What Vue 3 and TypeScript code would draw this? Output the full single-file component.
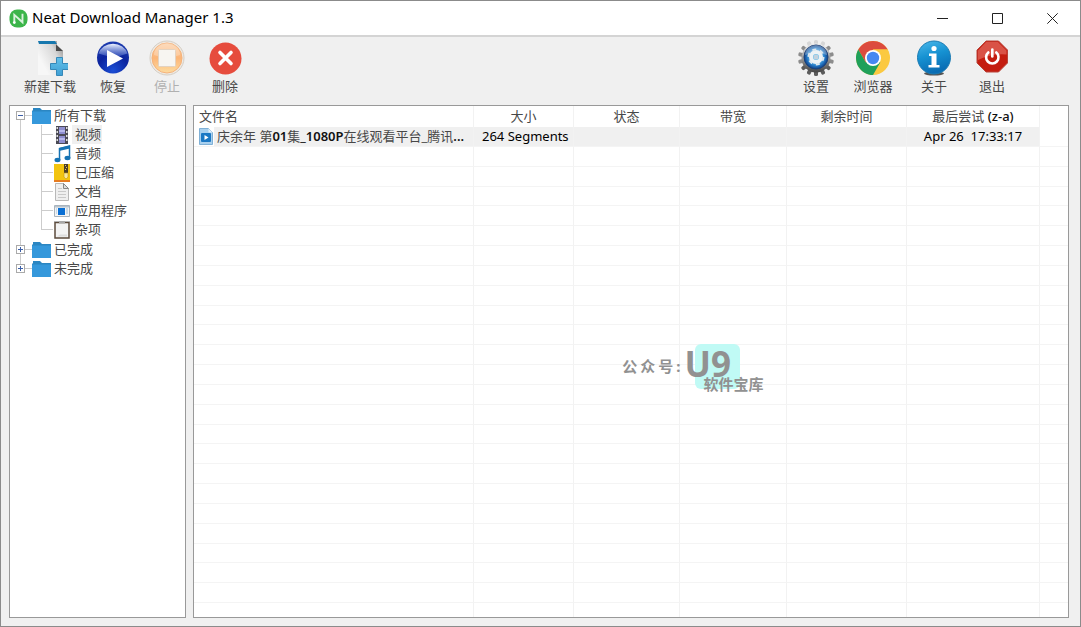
<script setup lang="ts">
import { ref } from 'vue'

interface Column {
  id: string
  label: string
}
interface Category {
  id: string
  label: string
}

const columns: Column[] = [
  { id: 'name', label: '文件名' },
  { id: 'size', label: '大小' },
  { id: 'status', label: '状态' },
  { id: 'bandwidth', label: '带宽' },
  { id: 'left', label: '剩余时间' },
  { id: 'last', label: '最后尝试' },
]

const categories: Category[] = [
  { id: 'video', label: '视频' },
  { id: 'audio', label: '音频' },
  { id: 'zip', label: '已压缩' },
  { id: 'doc', label: '文档' },
  { id: 'app', label: '应用程序' },
  { id: 'misc', label: '杂项' },
]

const groups: Category[] = [
  { id: 'done', label: '已完成' },
  { id: 'undone', label: '未完成' },
]

const emptyRows = 24
const selected = ref('video')
const teeth = Array.from({ length: 14 }, (_, i) => (i * 360) / 14)
const filmHoles = [1, 5, 9, 13]

function toothColor(angle: number): string {
  if (angle < 40 || angle > 320) return '#d6d6d6'
  if (angle > 110 && angle < 250) return '#5c5c5c'
  return '#8c8c8c'
}
</script>

<template>
  <div class="window">
    <header class="titlebar">
      <svg class="logo" viewBox="0 0 20 20" aria-hidden="true">
        <rect x="0.5" y="0.5" width="19" height="19" rx="8" fill="#3cb54a" />
        <path d="M5.600 13V6.200L14.200 14V5" fill="none" stroke="#d9f2dc" stroke-width="2" />
        <circle cx="5.600" cy="14.200" r="1.500" fill="#fff" />
      </svg>
      <h1>Neat Download Manager 1.3</h1>
      <button class="wbtn" aria-label="Minimize">
        <svg viewBox="0 0 11 11"><path d="M0 5.5h11" /></svg>
      </button>
      <button class="wbtn" aria-label="Maximize">
        <svg viewBox="0 0 11 11"><path d="M.5 .5h10v10H.5z" /></svg>
      </button>
      <button class="wbtn" aria-label="Close">
        <svg viewBox="0 0 11 11"><path d="M.3 .3l10.4 10.4M10.7 .3L.3 10.7" /></svg>
      </button>
    </header>

    <nav class="toolbar">
      <button class="tool t-new">
        <svg viewBox="0 0 36 36">
          <defs>
            <linearGradient id="paper" x1="1" y1="0.1" x2="0.2" y2="0.7">
              <stop offset="0" stop-color="#8f8f8f" /><stop offset="0.4" stop-color="#d8d8d8" /><stop offset="1" stop-color="#f7f7f7" />
            </linearGradient>
            <linearGradient id="plus" x1="0" y1="0" x2="0" y2="1">
              <stop offset="0" stop-color="#62c0ea" /><stop offset="1" stop-color="#3f9fd4" />
            </linearGradient>
          </defs>
          <path d="M6 1h19v4l6 6v24H6z" fill="url(#paper)" />
          <path d="M6 1h17l2 3H7z" fill="#1778ae" />
          <path d="M24 4.500l7 6.500h-7z" fill="#4a4a4a" />
          <path d="M24.500 17.500h6v6h6v6h-6v6h-6v-6h-6v-6h6z" fill="url(#plus)" stroke="#3688b8" />
        </svg>
        <span>新建下载</span>
      </button>
      <button class="tool t-resume">
        <svg viewBox="0 0 36 36">
          <defs>
            <radialGradient id="blue" cx="0.5" cy="0.9" r="0.9">
              <stop offset="0" stop-color="#1c4fd6" /><stop offset="0.55" stop-color="#0c249e" /><stop offset="1" stop-color="#1d3cae" />
            </radialGradient>
            <linearGradient id="shine" x1="0" y1="0" x2="0" y2="1">
              <stop offset="0" stop-color="#eef3ff" /><stop offset="1" stop-color="#5876cf" stop-opacity="0.5" />
            </linearGradient>
          </defs>
          <circle cx="18" cy="17.500" r="16" fill="url(#blue)" />
          <path d="M3.500 13.500a15 13 0 0 1 29 0q-14 6-29 0z" fill="url(#shine)" />
          <path d="M12 10v17L28 18.500z" fill="#fff" />
        </svg>
        <span>恢复</span>
      </button>
      <button class="tool t-stop" disabled>
        <svg viewBox="0 0 36 36">
          <defs>
            <linearGradient id="peach" x1="0" y1="0" x2="0" y2="1">
              <stop offset="0" stop-color="#fbcfa6" /><stop offset="0.5" stop-color="#fcb577" /><stop offset="1" stop-color="#fddca0" />
            </linearGradient>
          </defs>
          <circle cx="18" cy="18" r="17" fill="#eee9e2" stroke="#d5cec5" />
          <circle cx="18" cy="18" r="15" fill="url(#peach)" stroke="#f5b27a" />
          <path d="M5 15a13 12 0 0 1 26 0q-13 5-26 0z" fill="#fff" opacity="0.25" />
          <rect x="9.500" y="9.500" width="17" height="17" rx="1" fill="#f7f5f1" stroke="#e3d2c0" />
        </svg>
        <span>停止</span>
      </button>
      <button class="tool t-delete">
        <svg viewBox="0 0 36 36">
          <circle cx="18.500" cy="18.500" r="16" fill="#e64c3d" />
          <path d="M13 12.500l11 11M24 12.500l-11 11" stroke="#fff" stroke-width="3.600" stroke-linecap="round" />
        </svg>
        <span>删除</span>
      </button>
      <span class="spacer"></span>
      <button class="tool t-settings">
        <svg viewBox="0 0 36 36">
          <defs>
            <linearGradient id="steel" x1="0" y1="0" x2="0" y2="1">
              <stop offset="0" stop-color="#eee" /><stop offset="0.4" stop-color="#aaa" /><stop offset="1" stop-color="#444" />
            </linearGradient>
            <radialGradient id="ring">
              <stop offset="0.4" stop-color="#6bc0ec" /><stop offset="0.75" stop-color="#2377c4" /><stop offset="1" stop-color="#123f83" />
            </radialGradient>
          </defs>
          <rect
            v-for="a in teeth"
            :key="a"
            x="16"
            y="0"
            width="4"
            height="8"
            rx="1.500"
            :transform="`rotate(${a} 18 18)`"
            :fill="toothColor(a)"
          />
          <circle cx="18" cy="18" r="14.500" fill="url(#steel)" />
          <circle cx="18" cy="17" r="12" fill="url(#ring)" stroke="#1b427b" />
          <path d="M7 15a11 10 0 0 1 22 0q-11-4-22 0z" fill="#fff" opacity="0.3" />
          <circle cx="18" cy="17" r="5" fill="none" stroke="#eef2f5" stroke-width="4" />
          <circle cx="18" cy="17" r="7.500" fill="none" stroke="#dfe8ee" stroke-dasharray="4 3.850" stroke-width="2" />
          <circle cx="18" cy="17" r="2.500" fill="#c3d2de" />
        </svg>
        <span>设置</span>
      </button>
      <button class="tool t-browser">
        <svg viewBox="0 0 36 36">
          <circle cx="18" cy="18" r="17" fill="#fbc941" />
          <path d="M3.280 9.500A17 17 0 0 1 32.720 9.500H18L10.640 22.250z" fill="#dc4b3e" />
          <path d="M3.280 9.500A17 17 0 0 0 18 35L25.360 22.250H10.640z" fill="#1fa05a" />
          <path d="M18 9.500H32.720L35 18l-9.600 4.250z" fill="#fbc941" />
          <circle cx="18" cy="18" r="8" fill="#fff" />
          <circle cx="18" cy="18" r="6.200" fill="#4688f1" />
        </svg>
        <span>浏览器</span>
      </button>
      <button class="tool t-about">
        <svg viewBox="0 0 36 36">
          <defs>
            <linearGradient id="cyan" x1="0" y1="0" x2="0.3" y2="1">
              <stop offset="0" stop-color="#4db9ea" /><stop offset="0.5" stop-color="#1692d2" /><stop offset="1" stop-color="#0a6db4" />
            </linearGradient>
          </defs>
          <ellipse cx="18" cy="33.500" rx="10" ry="2" fill="#555" />
          <circle cx="18" cy="17.500" r="16.500" fill="url(#cyan)" stroke="#1c7cb4" />
          <circle cx="18" cy="8.500" r="2.600" fill="#fff" />
          <path d="M13 13.500h7.500v11.500h3v2.500h-11v-2.500h3v-9H13z" fill="#fff" />
        </svg>
        <span>关于</span>
      </button>
      <button class="tool t-exit">
        <svg viewBox="0 0 36 36">
          <path d="M12 1h12.500l9 9v13l-9 9H12l-9-9v-13z" fill="#c41d10" stroke="#b9453a" />
          <path d="M12 2h12l8.500 8.500v4Q18 13 4 20v-9.500z" fill="#e36a5e" opacity="0.7" />
          <path d="M14.300 12.500a6.200 6.200 0 1 0 8 0" fill="none" stroke="#fff" stroke-width="2.600" stroke-linecap="round" />
          <path d="M18.300 9.500v7" stroke="#fff" stroke-width="2.600" stroke-linecap="round" />
        </svg>
        <span>退出</span>
      </button>
    </nav>

    <main class="body">
      <aside class="panel tree">
        <ul class="roots">
          <li>
            <div class="node">
              <button class="toggle" aria-label="Collapse"><svg viewBox="0 0 9 9"><path d="M2 4.500h5" /></svg></button>
              <i class="dash"></i>
              <button class="entry root">
                <svg class="folder" viewBox="0 0 19 16"><path d="M0 2.500h1V0h7l2 2h9v14H0z" fill="#2b86c2" /><path d="M0 3.500h19V16H0z" fill="#3598db" /></svg>
                <span>所有下载</span>
              </button>
            </div>
            <ul class="children">
              <li v-for="c in categories" :key="c.id">
                <button class="entry" :class="{ on: selected === c.id }" @click="selected = c.id">
                  <svg v-if="c.id === 'video'" class="leaf" viewBox="0 0 17 18">
                    <path d="M2 0h12v18H2z" fill="#4b4a55" />
                    <path d="M5 1h6v7H5zM5 10h6v7H5z" fill="#8e8ed0" />
                    <path d="M5 4h6v2H5zM5 12h6v2H5z" fill="#b7b8ec" />
                    <rect v-for="y in filmHoles" :key="y" x="2.500" :y="y" width="1.500" height="2" fill="#ddd" />
                    <rect v-for="y in filmHoles" :key="'r' + y" x="12" :y="y" width="1.500" height="2" fill="#ddd" />
                  </svg>
                  <svg v-else-if="c.id === 'audio'" class="leaf" viewBox="0 0 17 18">
                    <path d="M5.500 15V3.500L15.500 1v12" fill="none" stroke="#1673b4" stroke-width="1.500" />
                    <path d="M5 3l11-2.500v3L5 6z" fill="#1673b4" />
                    <ellipse cx="3.500" cy="15" rx="3" ry="2.200" fill="#1673b4" />
                    <ellipse cx="13.500" cy="13" rx="3" ry="2.200" fill="#1673b4" />
                  </svg>
                  <svg v-else-if="c.id === 'zip'" class="leaf" viewBox="0 0 17 18">
                    <path d="M0 0h16v17H0z" fill="#f2c40f" /><path d="M0 16h16v2H0z" fill="#e67c22" />
                    <path d="M10 0h4v9h-4z" fill="#4b3e28" /><path d="M11 1h1v1h-1zM12 3h1v1h-1zM11 5h1v1h-1z" fill="#e3c661" />
                    <path d="M10 9h4v4l-2 2-2-2z" fill="#f7e7a0" stroke="#c49c12" stroke-width=".6" />
                  </svg>
                  <svg v-else-if="c.id === 'doc'" class="leaf" viewBox="0 0 17 18">
                    <path d="M1.500 .5h8l5 5v12h-13z" fill="#efefef" stroke="#b8b8b8" /><path d="M9.500 .5v5h5z" fill="#ddd" stroke="#888" />
                    <path d="M4 5.500h4M4 8.500h8M4 11.500h8M4 14.500h8" stroke="#c9c9c9" />
                  </svg>
                  <svg v-else-if="c.id === 'app'" class="leaf" viewBox="0 0 17 18">
                    <path d="M.5 3.500h15v11H.5z" fill="#f4f4f4" stroke="#aab4bd" /><path d="M1 4h14v1.500H1z" fill="#b7c3cd" />
                    <path d="M4 6h7v7H4z" fill="#0a6fd4" /><path d="M2 7h1M2 9h1M2 11h1M12 7h2M12 9h2M12 11h2" stroke="#9fc0da" />
                  </svg>
                  <svg v-else class="leaf" viewBox="0 0 17 18">
                    <path d="M1 1.500h14v15.500H1z" fill="#f3f3f3" stroke="#5c4b3d" stroke-width="1.500" />
                    <path d="M0 .5h16" stroke="#b4b4b4" /><path d="M5 0h6v2.500H5z" fill="#a9a9a9" /><path d="M3 15.500l3-2h7v2z" fill="#ddd" />
                  </svg>
                  <span>{{ c.label }}</span>
                </button>
              </li>
            </ul>
          </li>
          <li v-for="g in groups" :key="g.id">
            <div class="node">
              <button class="toggle" aria-label="Expand"><svg viewBox="0 0 9 9"><path d="M2 4.500h5M4.500 2v5" /></svg></button>
              <i class="dash"></i>
              <button class="entry root">
                <svg class="folder" viewBox="0 0 19 16"><path d="M0 2.500h1V0h7l2 2h9v14H0z" fill="#2b86c2" /><path d="M0 3.500h19V16H0z" fill="#3598db" /></svg>
                <span>{{ g.label }}</span>
              </button>
            </div>
          </li>
        </ul>
      </aside>

      <section class="panel list">
        <table>
          <thead>
            <tr>
              <th v-for="c in columns" :key="c.id" scope="col">{{ c.label }}<b v-if="c.id === 'last'"> (z-a)</b></th>
              <td></td>
            </tr>
          </thead>
          <tbody>
            <tr class="file">
              <td class="name">
                <svg viewBox="0 0 14 17">
                  <path d="M.5 .5h9l4 4v12H.5z" fill="#a9d0ee" stroke="#7fb0d6" /><path d="M9.500 .5v4h4z" fill="#e4f1fb" />
                  <rect x="2" y="5" width="10" height="9" rx="1" fill="#1b78c4" /><path d="M5.500 7v5l4-2.500z" fill="#fff" />
                </svg>
                <span>庆余年 第<b>01</b>集<b>_1080P</b>在线观看平台_腾讯<b>...</b></span>
              </td>
              <td class="size">264 Segments</td>
              <td></td>
              <td></td>
              <td></td>
              <td class="last">Apr 26&nbsp; 17:33:17</td>
              <td class="rest"></td>
            </tr>
            <tr v-for="n in emptyRows" :key="n">
              <td v-for="k in 7" :key="k"></td>
            </tr>
          </tbody>
        </table>
        <div class="mark">
          <div class="account"><span>公</span><span>众</span><span>号</span><span>:</span></div>
          <div class="badge">
            <strong>U9</strong>
            <em>软件宝库</em>
          </div>
        </div>
      </section>
    </main>
  </div>
</template>

<style>
html,
body,
#app {
  height: 100%;
}
</style>

<style scoped>
.window {
  box-sizing: border-box;
  height: 100%;
  display: flex;
  flex-direction: column;
  border: 1px solid #8b8b8b;
  background: #f0f0f0;
  color: #484848;
  font: 13px/19px "Noto Sans", "Noto Sans CJK SC", sans-serif;
}
button {
  margin: 0;
  padding: 0;
  border: 0;
  background: none;
  font: inherit;
  color: inherit;
}
ul {
  margin: 0;
  padding: 0;
  list-style: none;
}
svg {
  display: block;
  flex: none;
}
.titlebar {
  display: flex;
  align-items: center;
  height: 34px;
  padding-left: 8px;
  background: #fff;
  border-bottom: 2px solid #d4d4d4;
}
.logo {
  width: 19px;
  height: 19px;
}
h1 {
  flex: 1;
  margin: 0 0 0 4px;
  padding-bottom: 2px;
  font: 15px/20px "Noto Sans", sans-serif;
  color: #000;
}
.wbtn {
  display: flex;
  align-items: center;
  justify-content: center;
  width: 55px;
  height: 34px;
}
.wbtn svg {
  width: 11px;
  height: 11px;
  fill: none;
  stroke: #222;
}
.toolbar {
  display: flex;
  padding: 3px 63px 9px 17px;
}
.tool {
  display: flex;
  flex-direction: column;
  align-items: center;
  gap: 1px;
}
.tool svg {
  width: 36px;
  height: 36px;
}
.tool:disabled {
  color: #b0b0b0;
}
.t-new { width: 64px; }
.t-resume { width: 62px; }
.t-stop { width: 46px; }
.t-delete { width: 70px; }
.t-settings { width: 58px; }
.t-browser { width: 56px; }
.t-about { width: 66px; }
.t-exit { width: 50px; }
.spacer {
  flex: 1;
}
.body {
  flex: 1;
  min-height: 0;
  display: grid;
  grid-template-columns: 177px minmax(0, 1fr);
  gap: 7px;
  padding: 0 11px 8px 8px;
}
.panel {
  min-height: 0;
  overflow: hidden;
  background: #fff;
  border: 1px solid #999;
}
.roots {
  position: relative;
  padding-left: 6px;
}
.roots::before {
  content: "";
  position: absolute;
  left: 10px;
  top: 10px;
  bottom: 10px;
  border-left: 1px solid #ccc;
}
.node {
  position: relative;
  display: flex;
  align-items: center;
  height: 19px;
}
.toggle {
  box-sizing: border-box;
  width: 9px;
  height: 9px;
  background: #fff;
  outline: 1px solid #aaa;
  outline-offset: -1px;
}
.toggle svg {
  width: 9px;
  height: 9px;
  fill: none;
  stroke: #3c5fa8;
}
.dash {
  width: 7px;
  border-top: 1px solid #ccc;
}
.entry {
  display: flex;
  align-items: center;
  height: 19px;
  white-space: nowrap;
}
.entry.root {
  gap: 3px;
}
.folder {
  width: 19px;
  height: 16px;
}
.children {
  position: relative;
  padding: 0 0 1px 38px;
}
.children::before {
  content: "";
  position: absolute;
  left: 25px;
  top: 0;
  bottom: 10px;
  border-left: 1px solid #ccc;
}
.children li::before {
  content: "";
  position: absolute;
  left: 25px;
  width: 12px;
  margin-top: 9px;
  border-top: 1px solid #ccc;
}
.children .entry {
  gap: 1px;
}
.children .entry span {
  padding: 0 1px 0 3px;
}
.children .on span {
  background: #f0f0f0;
}
.leaf {
  width: 17px;
  height: 18px;
}
.list {
  position: relative;
}
table {
  display: grid;
  box-sizing: border-box;
  height: 100%;
  grid-template-columns: 280fr 100fr 106fr 107fr 120fr 133fr 28fr;
  grid-template-rows: 21px 20px repeat(23, minmax(0, 1fr)) 14px;
}
thead,
tbody {
  display: contents;
}
tr {
  display: grid;
  grid-column: 1 / -1;
  grid-template-columns: subgrid;
}
th,
td {
  display: block;
  min-width: 0;
  padding: 0;
  overflow: hidden;
  white-space: nowrap;
  border-right: 1px solid #f2f2f2;
  border-bottom: 1px solid #f4f4f4;
}
th {
  padding-top: 1px;
  font-weight: 400;
  text-align: center;
  border-bottom: 0;
}
th:first-child {
  padding-left: 5px;
  text-align: left;
}
thead td,
tr:last-child td {
  border-bottom: 0;
}
td:last-child {
  border-right: 0;
}
th b {
  font-weight: 500;
  color: #111;
}
.file td {
  background: #f0f0f0;
}
.file .name {
  display: flex;
  align-items: center;
  gap: 1px;
  padding-left: 5px;
  background: #fff;
}
.name svg {
  width: 14px;
  height: 17px;
}
.name span {
  flex: 1;
  padding-left: 3px;
  background: #f0f0f0;
}
.name b {
  font-weight: 600;
  color: #111;
}
.file .size {
  padding-left: 8px;
  color: #000;
}
.file .last {
  text-align: center;
  color: #000;
}
.file .rest {
  background: #fff;
}
.mark {
  position: absolute;
  left: 49%;
  top: 46.5%;
  display: flex;
  align-items: center;
  color: #919191;
  font-weight: 700;
}
.account {
  display: flex;
  gap: 3px;
  font-size: 15px;
}
.badge {
  position: relative;
  width: 45px;
  height: 45px;
  margin-left: 14px;
  border-radius: 6px;
  background: #c0faf5;
}
.badge strong {
  position: absolute;
  left: -10px;
  top: 6px;
  font: 700 35px/27px "Noto Sans", sans-serif;
}
.badge em {
  position: absolute;
  left: 9px;
  top: 33px;
  font-size: 15px;
  line-height: 15px;
  font-style: normal;
  white-space: nowrap;
}
</style>
